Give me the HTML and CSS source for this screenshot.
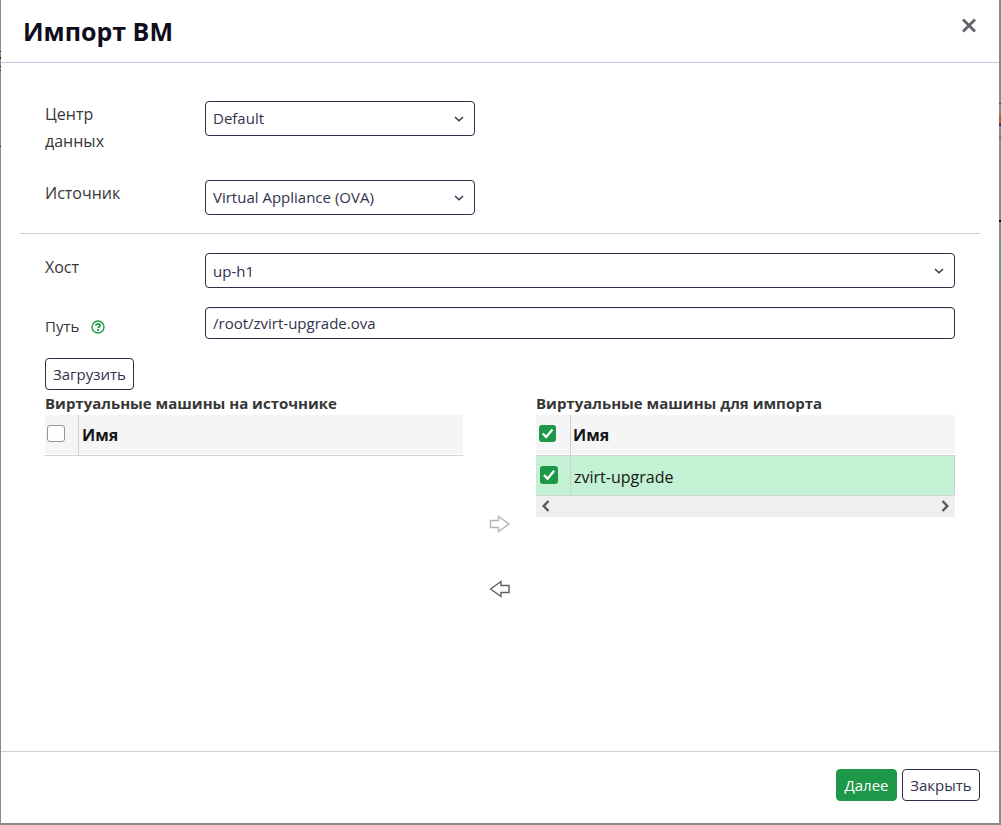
FILE: index.html
```
<!DOCTYPE html>
<html lang="ru">
<head>
  <meta charset="UTF-8">
  <meta name="viewport" content="width=device-width, initial-scale=1.0">
  <title>Импорт ВМ</title>
  <link rel="stylesheet" href="styles.css">
</head>
<body>
  <div class="modal">
    <div class="modal-header">
      <h1>Импорт ВМ</h1>
      <button class="close" aria-label="Закрыть">
        <svg width="16" height="16" viewBox="0 0 16 16"><path d="M2 1.5L14 13.5M14 1.5L2 13.5"/></svg>
      </button>
    </div>

    <div class="modal-body">
      <div class="form-row row-dc">
        <label>Центр данных</label>
        <div class="select short">
          <span>Default</span>
          <svg class="caret" width="10" height="6" viewBox="0 0 10 6"><path d="M1 1L5 4.8L9 1"/></svg>
        </div>
      </div>
      <div class="form-row row-source">
        <label>Источник</label>
        <div class="select short">
          <span>Virtual Appliance (OVA)</span>
          <svg class="caret" width="10" height="6" viewBox="0 0 10 6"><path d="M1 1L5 4.8L9 1"/></svg>
        </div>
      </div>

      <hr>

      <div class="form-row row-host">
        <label>Хост</label>
        <div class="select select-host">
          <span>up-h1</span>
          <svg class="caret" width="10" height="6" viewBox="0 0 10 6"><path d="M1 1L5 4.8L9 1"/></svg>
        </div>
      </div>
      <div class="form-row row-path">
        <label>Путь
          <svg class="help" width="14" height="14" viewBox="0 0 14 14">
            <circle cx="7" cy="7" r="6"/>
            <path d="M4.9 5.5C5 3.4 9.2 3.3 9.1 5.5C9.1 6.8 7.1 6.7 7.1 8.3M7.1 9.3V10.9"/>
          </svg>
        </label>
        <input class="text-input" type="text" value="/root/zvirt-upgrade.ova">
      </div>

      <button class="btn btn-load">Загрузить</button>

      <div class="transfer">
        <div class="panel">
          <h2>Виртуальные машины на источнике</h2>
          <div class="grid-head">
            <div class="cell-check"><span class="checkbox"></span></div>
            <div class="cell-name">Имя</div>
          </div>
        </div>

        <div class="arrows">
          <svg class="disabled" width="22" height="18" viewBox="0 0 22 18"><path d="M1.5 5.5H9.5V1.5L20 9L9.5 16.5V12.5H1.5Z"/></svg>
          <svg width="22" height="18" viewBox="0 0 22 18"><path d="M20 5.5H12V1.5L1.5 9L12 16.5V12.5H20Z"/></svg>
        </div>

        <div class="panel panel-import">
          <h2>Виртуальные машины для импорта</h2>
          <div class="grid-head">
            <div class="cell-check">
              <span class="checkbox checked"><svg viewBox="0 0 18 18"><path d="M4 9L7.6 12.7L14.2 4.8"/></svg></span>
            </div>
            <div class="cell-name">Имя</div>
          </div>
          <div class="grid-row">
            <div class="cell-check">
              <span class="checkbox checked"><svg viewBox="0 0 18 18"><path d="M4 9L7.6 12.7L14.2 4.8"/></svg></span>
            </div>
            <div class="cell-name">zvirt-upgrade</div>
          </div>
          <div class="scrollbar">
            <svg width="9" height="12" viewBox="0 0 9 12"><path d="M7.5 1L2.7 6L7.5 11"/></svg>
            <svg width="9" height="12" viewBox="0 0 9 12"><path d="M1.5 1L6.3 6L1.5 11"/></svg>
          </div>
        </div>
      </div>
    </div>

    <div class="modal-footer">
      <button class="btn btn-primary">Далее</button>
      <button class="btn">Закрыть</button>
    </div>
  </div>
</body>
</html>
```
FILE: styles.css
```
* {
  box-sizing: border-box;
}
body {
  margin: 0;
  height: 825px;
  padding: 0 2px 2px 1px;
  background-color: #8b8b8b;
  /* slivers of the dimmed page on both sides of the dialog */
  background-image:
    linear-gradient(transparent 103px, #4a4f58 103px 104px, transparent 104px 114px, #9a6a3c 114px 123px, #3d434c 123px 126px, transparent 126px 137px, #4a4f58 137px 138px, transparent 138px 220px, #000 220px 222px, transparent 222px 240px, #6f9a80 240px 280px, transparent 280px),
    linear-gradient(transparent 51px, #222 51px 52px, transparent 52px 57px, #222 57px 59px, transparent 59px 66px, #222 66px 67px, transparent 67px 70px, #222 70px 71px, transparent 71px 146px, #222 146px 147px, transparent 147px);
  background-size: 2px 825px, 1px 825px;
  background-position: right top, left top;
  background-repeat: no-repeat;
  color: #363636;
  font-family: "Open Sans", "Noto Sans", sans-serif;
  font-size: 15px;
  overflow: hidden;
}
.modal {
  height: 823px;
  background-color: #fff;
  display: flex;
  flex-direction: column;
}
.modal-header {
  height: 63px;
  padding: 0 22px;
  border-bottom: 1px solid #c2c8dc;
  display: flex;
  justify-content: space-between;
}
h1 {
  margin: 13px 0 0;
  font-size: 25px;
  line-height: 36px;
  color: #0d0d1c;
}
.close {
  height: 16px;
  margin-top: 18px;
  padding: 0;
  border: none;
  background: none;
}
.close svg {
  display: block;
  fill: none;
  stroke: #62626c;
  stroke-width: 2.8;
}
.modal-body {
  flex: 1;
  padding: 38px 44px 0;
}
.form-row {
  display: flex;
  align-items: flex-start;
}
.form-row label {
  width: 160px;
  padding-right: 60px;
  font-size: 16px;
  line-height: 27px;
}
.row-dc {
  height: 79px;
}
.row-source {
  height: 53px;
}
.row-host {
  height: 54px;
}
.row-host label {
  padding-top: 1px;
}
.form-row.row-path label {
  padding: 6px 0 0;
  font-size: 15px;
  display: flex;
  align-items: center;
  gap: 12px;
}
.select,
.text-input {
  flex: 1;
  height: 35px;
  padding: 0 10px 0 7px;
  border: 1px solid #2e2e46;
  border-radius: 4px;
  color: #32324a;
  background-color: #fff;
  font-family: inherit;
  font-size: 15px;
}
.select {
  display: flex;
  align-items: center;
  justify-content: space-between;
}
.select.short {
  flex: 0 0 270px;
}
.select span {
  padding-bottom: 1px;
}
.select-host span {
  padding: 1px 0 0;
}
.text-input {
  height: 32px;
  box-shadow: inset 0 1px 1px rgba(0, 0, 0, 0.08);
  outline: none;
}
.caret {
  fill: none;
  stroke: #32324a;
  stroke-width: 1.4;
}
.help {
  fill: none;
  stroke: #1d9849;
  stroke-width: 1.4;
}
.help path {
  stroke-width: 1.9;
}
hr {
  margin: 0 -25px 19px;
  border: none;
  border-top: 1px solid #d1d1d1;
}
.btn {
  height: 32px;
  padding: 0 7px;
  border: 1px solid #2e2e46;
  border-radius: 4px;
  background-color: #fff;
  color: #32324a;
  font-family: inherit;
  font-size: 15px;
}
.btn-load {
  display: block;
  margin-top: 18px;
}
.btn-primary {
  border-color: #1d9849;
  background-color: #1d9849;
  color: #fff;
}
.transfer {
  display: grid;
  grid-template-columns: 418px 73px 419px;
  margin-top: 4px;
}
h2 {
  height: 21px;
  margin: 0;
  font-size: 15px;
  line-height: 18px;
}
.grid-head,
.grid-row {
  display: flex;
  height: 41px;
  border-bottom: 1px solid #d1d1d1;
  color: #151515;
  font-size: 16px;
}
.grid-head {
  background: linear-gradient(#f5f5f5 39px, #fff 39px);
  font-weight: bold;
}
.grid-row {
  height: 40px;
  border-right: 1px solid #d1d1d1;
  background-color: #c3f1d3;
}
.cell-check {
  width: 34px;
  padding: 10px 0 0 2px;
  border-right: 1px solid #d1d1d1;
}
.cell-name {
  padding-left: 3px;
  line-height: 40px;
}
.panel-import .cell-check {
  width: 35px;
  padding-left: 3px;
}
.panel-import .grid-head .cell-name {
  padding-left: 2px;
}
.panel-import .grid-row .cell-check {
  padding-left: 4px;
}
.grid-row .cell-name {
  line-height: 42px;
}
.checkbox {
  display: block;
  width: 18px;
  height: 17px;
  border: 1px solid #9292a0;
  border-radius: 3px;
  background-color: #fff;
}
.checkbox.checked {
  width: 17px;
  border: none;
  background-color: #1d9849;
}
.checkbox svg {
  display: block;
  fill: none;
  stroke: #fff;
  stroke-width: 2.4;
}
.grid-row .checkbox.checked {
  width: 18px;
  height: 18px;
}
.arrows {
  display: flex;
  flex-direction: column;
  align-items: center;
  gap: 47px;
  padding: 121px 0 0 1px;
}
.arrows svg {
  fill: none;
  stroke: #606060;
  stroke-width: 1.4;
}
.arrows .disabled {
  stroke: #b5b5b5;
}
.scrollbar {
  height: 21px;
  padding: 0 5px 1px;
  background-color: #efefef;
  display: flex;
  align-items: center;
  justify-content: space-between;
}
.scrollbar svg {
  fill: none;
  stroke: #585858;
  stroke-width: 2.4;
}
.modal-footer {
  height: 72px;
  padding: 17px 19px 0;
  border-top: 1px solid #d1d1d1;
  display: flex;
  justify-content: flex-end;
  gap: 5px;
}
.modal-footer .btn {
  min-width: 78px;
}
.modal-footer .btn-primary {
  min-width: 61px;
}
```
